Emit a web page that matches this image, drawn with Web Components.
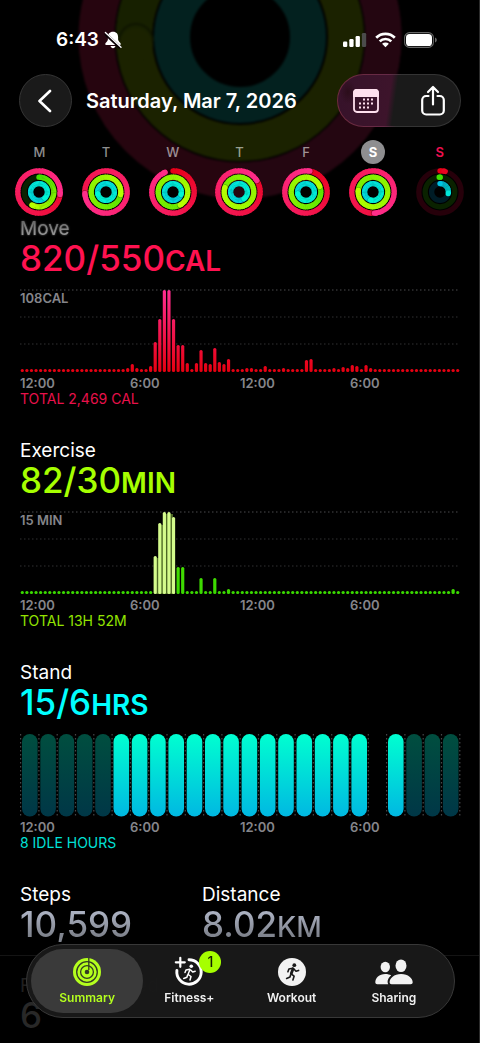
<!DOCTYPE html>
<html lang="en">
<head>
<meta charset="utf-8">
<meta name="viewport" content="width=device-width, initial-scale=1">
<title>Activity Summary</title>
<style>
  html { background: #000; }
  body {
    box-sizing: border-box;
    min-height: 100vh;
    margin: 0;
    border-right: 1px solid #2c2c2c;
    background: #000;
    color: #fff;
    font-family: Inter, "Liberation Sans", sans-serif;
    font-size: 18px;
  }
</style>
</head>
<body>
<activity-app></activity-app>

<script>
const define = (name, html, setup) => {
  const template = document.createElement('template');
  template.innerHTML = html;
  customElements.define(name, class extends HTMLElement {
    connectedCallback() {
      if (this.shadowRoot) return;
      const root = this.attachShadow({ mode: 'open' });
      root.append(template.content.cloneNode(true));
      if (setup) setup(this, root);
    }
  });
};

/* Progress rings: each ring is a run of short arcs whose colour moves from start to end. */
const mix = (a, b, t) => `rgb(${a.map((v, i) => Math.round(v + (b[i] - v) * t)).join()})`;
const point = (r, turn) => {
  const a = turn * 2 * Math.PI;
  return `${(24 + r * Math.sin(a)).toFixed(2)} ${(24 - r * Math.cos(a)).toFixed(2)}`;
};
const ringArcs = (r, progress, from, to, track) => {
  const w = 5.3;
  let out = `<circle cx="24" cy="24" r="${r}" stroke="${track}" stroke-width="${w}"/>`;
  const start = Math.max(0, progress - 1);
  const steps = 48;
  const span = progress - start;
  if (progress < 1) out += `<path d="M${point(r, 0)}L${point(r, 0.001)}" stroke="${mix(from, to, 0)}" stroke-width="${w}" stroke-linecap="round"/>`;
  for (let i = 0; i < steps; i++) {
    const a = start + span * i / steps;
    const b = Math.min(progress, start + span * (i + 1.3) / steps);
    out += `<path d="M${point(r, a)}A${r} ${r} 0 0 1 ${point(r, b)}" stroke="${mix(from, to, b / Math.max(progress, 0.4))}" stroke-width="${w}"/>`;
  }
  if (progress > 1) out += `<path d="M${point(r, progress)}L${point(r, progress + 0.006)}" stroke="#0005" stroke-width="${w}" stroke-linecap="round"/>`;
  out += `<path d="M${point(r, progress - 0.01)}L${point(r, progress)}" stroke="${mix(from, to, Math.min(1, progress / 0.4))}" stroke-width="${w}" stroke-linecap="round"/>`;
  return out;
};

define('activity-rings', `
  <style>
    :host { display: block; width: 48px; height: 48px; }
    svg { display: block; width: 100%; height: 100%; fill: none; }
  </style>
  <svg viewBox="0 0 48 48" aria-hidden="true"></svg>`,
  (host, root) => {
    const [move, exercise, stand] = host.getAttribute('values').split(' ').map(Number);
    root.querySelector('svg').innerHTML =
      ringArcs(21.2, move, [232, 0, 24], [255, 45, 138], '#26000a') +
      ringArcs(14.8, exercise, [66, 224, 0], [182, 255, 0], '#0a2200') +
      ringArcs(8.4, stand, [0, 195, 228], [0, 246, 212], '#001c26');
  });

define('status-bar', `
  <style>
    :host { display: flex; align-items: center; justify-content: space-between; height: 16px; padding: 32px 42px 26px 56px; font-size: 19px; font-weight: 600; line-height: 16px; }
    div { display: flex; align-items: center; }
    .left { gap: 5px; }
    .right { gap: 8px; }
    svg { display: block; fill: #fff; }
  </style>
  <div class="left"><span>6:43</span>
    <svg width="18" height="18" viewBox="0 0 18 18"><path d="M9 .8C5.500 .8 3.900 3.200 3.900 6v2.500c0 1.800-2.700 3.200-2.700 4.600 0 .6.4.9 1 .9h13.600c.6 0 1-.3 1-.9 0-1.400-2.700-2.800-2.700-4.600V6C14.100 3.200 12.500.8 9 .8zM6.600 15c.2 1.400 1.200 2.200 2.400 2.200s2.200-.8 2.400-2.200z"/><path d="M1.200 2.600l15.300 14.200" stroke="#0c0206" stroke-width="3.200"/><path d="M1.400 1.600l15.600 14.600" stroke="#fff" stroke-width="1.400" stroke-linecap="round"/></svg>
  </div>
  <div class="right">
    <svg width="24" height="16" viewBox="0 0 24 16"><rect x="0" y="9.500" width="4.300" height="5.500" rx="1.200"/><rect x="6.300" y="7" width="4.300" height="8" rx="1.200"/><rect x="12.600" y="4" width="4.300" height="11" rx="1.200"/><rect x="18.900" y="1" width="4.300" height="14" rx="1.200" fill="#4b4b4b"/></svg>
    <svg width="21" height="16" viewBox="0 0 21 16"><g fill="none" stroke="#fff" stroke-width="2.700"><path d="M1.200 5.800a13.200 13.200 0 0 1 18.600 0"/><path d="M4.700 9.400a8.200 8.200 0 0 1 11.600 0"/></g><path d="M10.500 15.200l-3.400-3.400a4.800 4.800 0 0 1 6.800 0z"/></svg>
    <svg width="33" height="16" viewBox="0 0 33 16"><rect x=".6" y=".6" width="28.800" height="14.800" rx="5" fill="none" stroke="#666" stroke-width="1.100"/><rect x="2" y="2" width="26" height="12" rx="3.600"/><path d="M31 5.500c1.200.4 1.800 1.300 1.800 2.500s-.6 2.100-1.800 2.500z" fill="#666"/></svg>
  </div>`);

define('nav-bar', `
  <style>
    :host { display: flex; align-items: center; padding: 0 18px 0 19px; height: 53px; }
    button { display: grid; place-items: center; margin: 0; padding: 0; border: 0; background: none; color: #fff; font: inherit; }
    svg { display: block; fill: none; stroke: #fff; stroke-linecap: round; stroke-linejoin: round; }
    .back { box-sizing: border-box; width: 53px; height: 53px; border-radius: 50%; background: #1a1a1a; border: 1px solid #353535; }
    h1 { flex: 1; margin: 0 0 0 14px; font-size: 20px; line-height: 24px; font-weight: 600; white-space: nowrap; }
    .pair {
      box-sizing: border-box; display: flex; justify-content: space-between; align-items: center;
      width: 124px; height: 53px; padding: 0 14px; border: 1px solid transparent; border-radius: 27px;
      background:
        radial-gradient(ellipse 8px 12px at 10px 17px, #2b0d1a, transparent) padding-box,
        linear-gradient(98deg, #36122a 0, #3d142b 42%, #1a1a1a 47%) padding-box,
        linear-gradient(96deg, #6e2a3c, #652a47 40%, #343434 50%) border-box;
    }
  </style>
  <button class="back" aria-label="Back"><svg width="16" height="24" viewBox="0 0 16 24" stroke-width="2.600"><path d="M12 2L1.500 12 12 22"/></svg></button>
  <h1>Saturday, Mar 7, 2026</h1>
  <div class="pair">
    <button aria-label="Calendar"><svg width="28" height="28" viewBox="0 0 28 28" stroke="none"><rect x="2" y="3" width="24" height="22" rx="3" fill="none" stroke="#ffe0ee" stroke-width="1.800"/><path d="M1.100 10V6a4 4 0 0 1 4-4h17.800a4 4 0 0 1 4 4v4z" fill="#ffe0ee" stroke="none"/><g fill="#ffe0ee" stroke="none"><rect x="11" y="11.500" width="2" height="2"/><rect x="15" y="11.500" width="2" height="2"/><rect x="19" y="11.500" width="2" height="2"/><rect x="7" y="15.500" width="2" height="2"/><rect x="11" y="15.500" width="2" height="2"/><rect x="15" y="15.500" width="2" height="2"/><rect x="19" y="15.500" width="2" height="2"/><rect x="7" y="19.500" width="2" height="2"/><rect x="11" y="19.500" width="2" height="2"/><rect x="15" y="19.500" width="2" height="2"/></g></svg></button>
    <button aria-label="Share"><svg width="26" height="32" viewBox="0 0 26 32" stroke-width="2.200"><path d="M8.500 11H6.200a4 4 0 0 0-4 4v10.500a4 4 0 0 0 4 4h13.600a4 4 0 0 0 4-4V15a4 4 0 0 0-4-4h-2.300M13 19.500V2.500M8 7l5-5 5 5"/></svg></button>
  </div>`);

define('week-day', `
  <style>
    :host { display: flex; flex-direction: column; align-items: center; gap: 4px; }
    .day { width: 24px; height: 24px; border-radius: 50%; font-size: 13px; line-height: 24px; font-weight: 500; text-align: center; color: rgba(255, 255, 255, .56); }
    :host([selected]) .day { background: #8e8e90; color: #fff; font-weight: 700; }
    :host([today]) .day { color: #ee1050; font-weight: 600; }
  </style>
  <span class="day"><slot></slot></span>`,
  (host, root) => {
    const rings = document.createElement('activity-rings');
    rings.setAttribute('values', host.getAttribute('values'));
    root.append(rings);
  });

define('page-header', `
  <style>
    :host { display: block; position: relative; overflow: hidden; height: 218px; }
    .glow { position: absolute; top: -133px; left: 50%; margin-left: -170px; width: 340px; height: 340px; filter: blur(1px); fill: none; }
    .front { position: relative; }
    .week { display: grid; grid-template-columns: repeat(7, 1fr); padding: 13px 6px 0; }
  </style>
  <svg class="glow" viewBox="0 0 340 340" aria-hidden="true">
    <g stroke-width="36">
      <circle cx="170" cy="170" r="143.500" stroke="#26050f"/>
      <path d="M170 26.500a143.500 143.500 0 0 1 0 287" stroke="#240611"/>
      <circle cx="170" cy="170" r="106" stroke="#1b2200"/>
      <path d="M64 170A106 106 0 0 1 170 64" stroke="#172000"/>
      <circle cx="66" cy="178" r="17" fill="#1b2200" stroke="none"/>
      <path d="M49 174a17 17 0 0 1 34 0" stroke="#0f1500" stroke-width="2"/>
      <circle cx="170" cy="170" r="68" stroke="#03211f"/>
    </g>
  </svg>
  <div class="front">
    <status-bar></status-bar>
    <nav-bar></nav-bar>
    <div class="week">
      <week-day values="1.27 0.58 1.380">M</week-day>
      <week-day values="1.74 1.28 1.720">T</week-day>
      <week-day values="0.94 1.42 1.300">W</week-day>
      <week-day values="1.16 1.80 1.400">T</week-day>
      <week-day values="1.03 1.19 1.720">F</week-day>
      <week-day values="1.49 1.77 1.550" selected>S</week-day>
      <week-day values="0.04 0.001 0.280" today>S</week-day>
    </div>
  </div>`);

/* 96 quarter-hour bars; data lists "index:height" for every bar taller than the 3px minimum. */
define('bar-chart', `
  <style>
    :host { display: block; position: relative; height: 82px; }
    svg { display: block; width: 100%; height: 100%; overflow: visible; }
    .max { position: absolute; left: 0; top: 0; font-size: 13px; line-height: 16px; font-weight: 600; color: #85858a; }
  </style>
  <span class="max"><slot></slot></span>
  <svg viewBox="0 0 440 82" preserveAspectRatio="none" aria-hidden="true"></svg>`,
  (host, root) => {
    const [top, bottom] = host.getAttribute('colors').split(' ');
    const pale = host.getAttribute('pale');
    const heights = new Array(96).fill(3);
    host.getAttribute('data').split(' ').forEach(pair => {
      const [i, h] = pair.split(':').map(Number);
      heights[i] = h;
    });
    let out = `<defs><linearGradient id="g" gradientUnits="userSpaceOnUse" x1="0" y1="0" x2="0" y2="82"><stop offset="0" stop-color="${top}"/><stop offset="1" stop-color="${bottom}"/></linearGradient></defs>`;
    [[0, '#4a4a4c'], [27, '#303032'], [54, '#303032']].forEach(([y, c]) => {
      out += `<path d="M0 ${y}H440" stroke="${c}" stroke-width="1.100" stroke-dasharray="1.500 2.500"/>`;
    });
    if (pale) out += `<path d="M135 82V46h4.500V13h4.500V2h9v5h2v75z" fill="#4c6824"/>`;
    heights.forEach((h, i) => {
      const x = (i + 0.5) * 440 / 96 - 1.6;
      const light = pale && i >= 29 && i <= 33;
      out += `<rect x="${x}" y="${82 - h}" width="3.200" height="${h}" rx="1.500" fill="${light ? pale : 'url(#g)'}"/>`;
    });
    root.querySelector('svg').innerHTML = out;
  });

/* 24 hourly capsules: d = idle, s = stood, - = no data. */
define('hour-chart', `
  <style>
    :host { display: block; height: 82px; }
    svg { display: block; width: 100%; height: 100%; overflow: visible; }
  </style>
  <svg viewBox="0 0 440 82" preserveAspectRatio="none" aria-hidden="true">
    <defs>
      <linearGradient id="s" x1="0" y1="0" x2="0" y2="1"><stop offset="0" stop-color="#00ffd0"/><stop offset="1" stop-color="#00b8e2"/></linearGradient>
      <linearGradient id="d" x1="0" y1="0" x2="0" y2="1"><stop offset="0" stop-color="#004e3f"/><stop offset="1" stop-color="#003747"/></linearGradient>
    </defs>
  </svg>`,
  (host, root) => {
    const step = 439.2 / 24;
    let out = '';
    for (let i = 0; i <= 24; i++) out += `<path d="M${0.6 + i * step} 0V82" stroke="#48484a" stroke-width="1.200" stroke-dasharray="1.500 2.500"/>`;
    [...host.getAttribute('hours')].forEach((c, i) => {
      if (c !== '-') out += `<rect x="${0.6 + i * step + 1.4}" y="0" width="15.600" height="82.500" rx="7.800" fill="url(#${c})"/>`;
    });
    root.querySelector('svg').insertAdjacentHTML('beforeend', out);
  });

define('metric-value', `
  <style>
    :host { display: block; }
    h2 { margin: 0; font-size: 19px; line-height: 22px; font-weight: 400; white-space: nowrap; }
    p { margin: 0; height: 36px; font-size: 35px; line-height: 36px; font-weight: 500; color: var(--tint); white-space: nowrap; }
    small { font-size: 28px; line-height: 20px; font-weight: 600; }
    :host([fading]) h2 { color: #aaa; text-shadow: 0 0 2px #888; -webkit-mask-image: linear-gradient(#0008, #000); mask-image: linear-gradient(#0008, #000); }
    :host([silver]) p { background: linear-gradient(#aab0c0 20%, #80848e 80%); -webkit-background-clip: text; background-clip: text; color: transparent; }
    :host([silver]) small { font-weight: 500; }
    :host([dim]) { color: #202020; }
    :host([dim]) p { color: #282828; }
  </style>
  <h2></h2><p><slot></slot><small></small></p>`,
  (host, root) => {
    root.querySelector('h2').textContent = host.getAttribute('label');
    root.querySelector('small').textContent = host.getAttribute('unit') || '';
  });

define('metric-section', `
  <style>
    :host { display: block; padding: 0 19px 33px 20px; }
    .chart { margin-top: 14px; }
    .times { display: grid; grid-template-columns: repeat(4, 1fr); margin-top: 3px; font-size: 13px; line-height: 16px; font-weight: 600; color: #85858a; }
    .total { margin: 0; font-size: 14px; line-height: 16px; color: var(--tint); }
  </style>
  <slot name="value"></slot>
  <div class="chart"><slot name="chart"></slot></div>
  <div class="times"><span>12:00</span><span>6:00</span><span>12:00</span><span>6:00</span></div>
  <p class="total"><slot></slot></p>`);

define('tab-item', `
  <style>
    :host { display: block; position: relative; }
    button { position: relative; display: flex; flex-direction: column; align-items: center; gap: 4px; width: 100%; margin: 0; padding: 9px 0 7px; border: 0; background: none; color: #f0f0f0; font: 600 12px/16px Inter, "Liberation Sans", sans-serif; }
    :host([selected])::before { content: ""; position: absolute; inset: 0 -5px; border-radius: 32px; background: #3a3a3a; }
    :host([selected]) button { color: #b4ff1e; }
    .icon { display: grid; place-items: center; height: 28px; }
  </style>
  <button><span class="icon"><slot name="icon"></slot></span><span><slot></slot></span></button>
  <slot name="badge"></slot>`);

define('count-badge', `
  <style>
    :host { position: absolute; top: 2px; left: 50%; margin-left: 10px; width: 22px; height: 22px; border-radius: 50%; background: #a6ff00; color: #142000; font-size: 14px; line-height: 22px; font-weight: 500; text-align: center; }
  </style><slot></slot>`);

define('tab-bar', `
  <style>
    :host { position: fixed; left: 26px; right: 25px; bottom: 25px; box-sizing: border-box; height: 74px; padding: 4px 9px; border: 1px solid #383838; border-radius: 37px; background: rgba(25, 25, 25, .97); }
    nav { display: grid; grid-template-columns: repeat(4, 1fr); }
    svg { display: block; overflow: visible; }
  </style>
  <nav aria-label="Sections">
    <tab-item selected>Summary
      <svg slot="icon" width="28" height="28" viewBox="0 0 28 28"><circle cx="14" cy="14" r="14" fill="#b4ff1e"/><g fill="none" stroke="#333b24" stroke-width="1.300"><circle cx="14" cy="14" r="10.300"/><circle cx="14" cy="14" r="6.400"/><path d="M15.800 0V12"/></g><circle cx="14" cy="14" r="2.300" fill="#333b24"/></svg>
    </tab-item>
    <tab-item>Fitness+
      <svg slot="icon" width="28" height="28" viewBox="0 0 28 28" fill="none" stroke="#fff" stroke-linecap="round" stroke-linejoin="round"><path d="M14 1.800A12.200 12.200 0 1 1 1.900 12.500" stroke-width="2.900"/><path d="M5.300-.2v9M.8 4.300h9" stroke-width="2.200"/><circle cx="16.300" cy="8.300" r="1.800" fill="#fff" stroke="none"/><path d="M15 11.500l-2 5M14.700 11.200l-3.700.8-1 2.500M15.700 12l2 2 2.500-.8M13.200 16.500l2.800 2-1 3.500M12.600 17l-.7 2.200-3.200 1.300" stroke-width="1.500"/></svg>
      <count-badge slot="badge">1</count-badge>
    </tab-item>
    <tab-item>Workout
      <svg slot="icon" width="28" height="28" viewBox="0 0 28 28" fill="none" stroke="#191919" stroke-linecap="round" stroke-linejoin="round"><circle cx="14" cy="14" r="14" fill="#f2f2f2" stroke="none"/><circle cx="16.300" cy="7.200" r="1.900" fill="#191919" stroke="none"/><path d="M15 10.800l-1.700 4.700" stroke-width="2.800"/><path d="M14.700 10.200l-3.800.8-1 2.800M15.900 11l2.100 2.300 2.600-.9M13.200 15.800l2.900 2.400-1.200 3.800M12.600 16.800l-.6 2.200-3.400 1.500" stroke-width="1.600"/></svg>
    </tab-item>
    <tab-item>Sharing
      <svg slot="icon" width="38" height="28" viewBox="0 0 38 28" fill="#f2f2f2"><ellipse cx="10.300" cy="9" rx="4.700" ry="5.300"/><ellipse cx="26" cy="7.700" rx="5.500" ry="6.300"/><path d="M14.600 24.300c0-4 4.400-8.300 11.500-8.300s11.600 4.300 11.600 8.300c0 1.200-.8 2-2 2H16.600c-1.200 0-2-.8-2-2zM13.200 26.300c-1.500-3.400.2-6.700 3-8.800-1.500-.8-3.500-1.400-5.900-1.400-6.200 0-10 4.200-10 8.200 0 1.200.8 2 2 2z"/></svg>
    </tab-item>
  </nav>`);

define('activity-app', `
  <style>
    :host { display: block; }
    .move { --tint: #ff1250; }
    .exercise { --tint: #a6ff00; }
    .stand { --tint: #00ffff; }
    .move .sum { color: #e8114b; }
    .exercise .sum { color: #93e400; }
    .stand .sum { color: #00e0d8; }
    .more { display: grid; grid-template-columns: 182px 1fr; padding: 0 20px; }
    .more.rule { margin-top: 13px; padding-top: 19px; border-top: 1px solid #141414; }
  </style>
  <page-header></page-header>
  <main>
    <metric-section class="move">
      <metric-value slot="value" label="Move" unit="CAL" fading>820/550</metric-value>
      <bar-chart slot="chart" colors="#ff2d92 #e60010" data="23:4 24:8 25:4 28:6 29:30 30:53 31:82 32:82 33:53 34:27 35:27 36:9 38:9 39:22 40:9 41:8 42:24 43:10 44:8 45:13 49:4 50:4 53:6 57:4 62:12 63:13 68:4 70:5 71:4 72:7 73:6 75:7 76:4">108CAL</bar-chart>
      <span class="sum">TOTAL 2,469 CAL</span>
    </metric-section>
    <metric-section class="exercise">
      <metric-value slot="value" label="Exercise" unit="MIN">82/30</metric-value>
      <bar-chart slot="chart" colors="#52e600 #3ad800" pale="#d4fb8c" data="29:38 30:71 31:82 32:82 33:77 34:27 35:27 39:16 42:16 45:5 94:5">15 MIN</bar-chart>
      <span class="sum">TOTAL 13H 52M</span>
    </metric-section>
    <metric-section class="stand">
      <metric-value slot="value" label="Stand" unit="HRS">15/6</metric-value>
      <hour-chart slot="chart" hours="dddddssssssssssssss-sddd"></hour-chart>
      <span class="sum">8 IDLE HOURS</span>
    </metric-section>
    <div class="more">
      <metric-value label="Steps" silver>10,599</metric-value>
      <metric-value label="Distance" unit="KM" silver>8.02</metric-value>
    </div>
    <div class="more rule">
      <metric-value label="Flights Climbed" dim>6</metric-value>
    </div>
  </main>
  <tab-bar></tab-bar>`);
</script>
</body>
</html>
